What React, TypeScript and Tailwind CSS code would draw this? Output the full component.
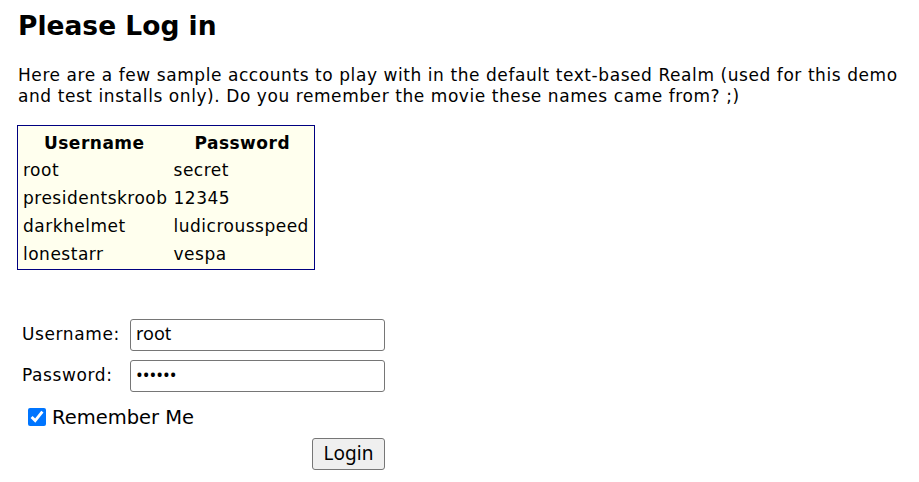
import React from 'react';

const accounts = [
  { username: 'root', password: 'secret' },
  { username: 'presidentskroob', password: '12345' },
  { username: 'darkhelmet', password: 'ludicrousspeed' },
  { username: 'lonestarr', password: 'vespa' },
];

const App: React.FC = () => {
  return (
    <div className="bg-white text-black min-h-[482px] px-[18px] pt-[11px] font-['DejaVu_Sans',Verdana,sans-serif]">
      <h1 className="text-[26.5px] font-bold leading-[30px]">Please Log in</h1>

      <p className="mt-[24px] text-[17px] tracking-[0.57px] leading-[21px] whitespace-nowrap">
        <span className="block">
          Here are a few sample accounts to play with in the default text-based Realm (used for this demo
        </span>
        <span className="block">and test installs only). Do you remember the movie these names came from? ;)</span>
      </p>

      <table className="mt-[18px] -ml-px border border-[#000080] bg-[#ffffee] border-separate border-spacing-0 text-[17px] tracking-[0.5px]">
        <thead>
          <tr>
            <th className="px-[5px] pt-[5px] h-[29px] font-bold text-center">Username</th>
            <th className="px-[5px] pt-[5px] h-[29px] font-bold text-center">Password</th>
          </tr>
        </thead>
        <tbody>
          {accounts.map((a) => (
            <tr key={a.username}>
              <td className="pl-[5px] pr-[3px] h-[28px] text-left">{a.username}</td>
              <td className="pl-[3px] pr-[5px] h-[28px] text-left">{a.password}</td>
            </tr>
          ))}
        </tbody>
      </table>

      <form className="mt-[48px] w-[370px]" onSubmit={(e) => e.preventDefault()}>
        <div className="flex items-center h-[34px]">
          <label className="w-[112px] pl-[4px] text-[17px] tracking-[0.6px]">Username:</label>
          <input
            type="text"
            defaultValue="root"
            className="w-[255px] h-[32px] border border-[#767676] rounded-[3px] px-[5px] pb-[3px] text-[18px] font-['Noto_Sans',sans-serif] outline-none"
          />
        </div>
        <div className="flex items-center h-[34px] mt-[7px]">
          <label className="w-[112px] pl-[4px] text-[17px] tracking-[0.6px]">Password:</label>
          <input
            type="password"
            defaultValue="secret"
            className="w-[255px] h-[32px] border border-[#767676] rounded-[3px] px-[5px] pb-[3px] text-[18px] font-['Noto_Sans',sans-serif] outline-none"
          />
        </div>
        <div className="flex items-center mt-[10px] pl-[10px]">
          <input type="checkbox" defaultChecked className="w-[18px] h-[18px] accent-[#0075ff] m-0" />
          <span className="ml-[6px] text-[19.5px]">Remember Me</span>
        </div>
        <div className="flex justify-end mt-[6px] pr-[3px]">
          <button
            type="submit"
            className="w-[73px] h-[32px] bg-[#efefef] border border-[#767676] rounded-[3px] text-[19px] font-['Noto_Sans',sans-serif] leading-none"
          >
            Login
          </button>
        </div>
      </form>
    </div>
  );
};

export default App;
